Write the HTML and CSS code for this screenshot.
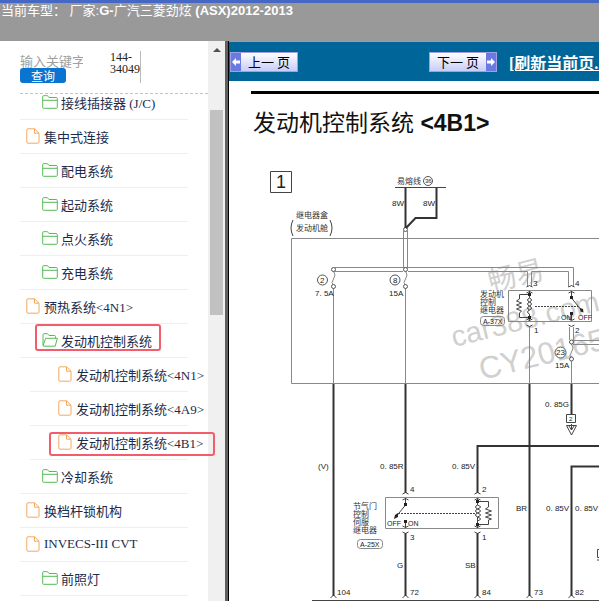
FILE: index.html
```html
<!DOCTYPE html>
<html lang="zh-CN">
<head>
    <meta charset="UTF-8">
    <meta name="viewport" content="width=device-width, initial-scale=1.0">
    <title>发动机控制系统 &lt;4B1&gt;</title>
    <link rel="stylesheet" href="styles.css">
</head>
<body>
    <svg class="defs" aria-hidden="true">
        <symbol id="folder" viewBox="0 0 16 14">
            <path d="M.7 12.500V1.500q0-.8.8-.8H5.500l1.500 1.800H14.300q1 0 1 1v9q0 .8-.8.8H1.500q-.8 0-.8-.8zM.7 5.300H15.300"/>
        </symbol>
        <symbol id="folder-open" viewBox="0 0 16 14">
            <path d="M1 12.500V1.500q0-.8.8-.8H5.500l1.500 1.800H12.500q1 0 1 1V5M1 12.800L3.600 5.300H15.400L13.200 13.200H1.500z"/>
        </symbol>
        <symbol id="file" viewBox="0 0 14 16">
            <path d="M2 .8H8.500L13 5.200V14q0 1.200-1.200 1.200H2Q.8 15.200.8 14V2Q.8.8 2 .8zM8.500.8V5.200H13"/>
        </symbol>
    </svg>

    <header class="header">当前车型： 厂家:<b>G-</b>广汽三菱劲炫 <b>(ASX)2012-2013</b></header>

    <div class="frames">
        <aside class="sidebar">
            <div class="pane">
                <form class="search">
                    <div class="search-box">
                        <input class="keyword" type="text" placeholder="输入关键字" aria-label="输入关键字">
                        <button class="query" type="button">查询</button>
                    </div>
                    <div class="code">144-<br>34049</div>
                </form>
                <ul class="tree">
                    <li class="level2"><a href="#"><svg class="icon folder"><use href="#folder"/></svg>接线插接器 (J/C)</a></li>
                    <li class="level1"><a href="#"><svg class="icon file"><use href="#file"/></svg>集中式连接</a></li>
                    <li class="level2"><a href="#"><svg class="icon folder"><use href="#folder"/></svg>配电系统</a></li>
                    <li class="level2"><a href="#"><svg class="icon folder"><use href="#folder"/></svg>起动系统</a></li>
                    <li class="level2"><a href="#"><svg class="icon folder"><use href="#folder"/></svg>点火系统</a></li>
                    <li class="level2"><a href="#"><svg class="icon folder"><use href="#folder"/></svg>充电系统</a></li>
                    <li class="level1"><a href="#"><svg class="icon file"><use href="#file"/></svg>预热系统&lt;4N1&gt;</a></li>
                    <li class="level2 marked-group"><a href="#"><svg class="icon folder"><use href="#folder-open"/></svg>发动机控制系统</a></li>
                    <li class="level3"><a href="#"><svg class="icon file"><use href="#file"/></svg>发动机控制系统&lt;4N1&gt;</a></li>
                    <li class="level3"><a href="#"><svg class="icon file"><use href="#file"/></svg>发动机控制系统&lt;4A9&gt;</a></li>
                    <li class="level3 marked-item"><a href="#"><svg class="icon file"><use href="#file"/></svg>发动机控制系统&lt;4B1&gt;</a></li>
                    <li class="level2"><a href="#"><svg class="icon folder"><use href="#folder"/></svg>冷却系统</a></li>
                    <li class="level1"><a href="#"><svg class="icon file"><use href="#file"/></svg>换档杆锁机构</a></li>
                    <li class="level1"><a href="#"><svg class="icon file"><use href="#file"/></svg>INVECS-III CVT</a></li>
                    <li class="level2"><a href="#"><svg class="icon folder"><use href="#folder"/></svg>前照灯</a></li>
                </ul>
            </div>
            <div class="scrollbar">
                <span class="arrow-up"></span>
                <span class="thumb"></span>
            </div>
        </aside>

        <main class="content">
            <nav class="toolbar">
                <button class="pager prev" type="button">
                    <svg class="pager-arrow" viewBox="0 0 10 17"><path d="M1 8.500L5 4.500V7H9V10H5V12.500z"/></svg>
                    <span>上一 页</span>
                </button>
                <button class="pager next" type="button">
                    <span>下一 页</span>
                    <svg class="pager-arrow" viewBox="0 0 10 17"><path d="M9 8.500L5 4.500V7H1V10H5V12.500z"/></svg>
                </button>
                <a class="refresh" href="#">[刷新当前页...]</a>
            </nav>

            <h1 class="title">发动机控制系统 <b>&lt;4B1&gt;</b></h1>

            <svg class="diagram" viewBox="229 150 370 451" role="img" aria-label="发动机控制系统 电路图">
                <!-- 水印 -->
                <g class="watermark">
                    <text x="491" y="292" font-size="28" transform="rotate(-14 491 292)">畅易</text>
                    <text x="454" y="347" font-size="29" transform="rotate(-14 454 347)">car388.com</text>
                    <text x="482" y="380" font-size="31" transform="rotate(-14 482 380)">CY20165</text>
                </g>

                <!-- 细线 -->
                <g class="thin">
                    <path d="M270.500 171.500h21v21h-21z" class="dark"/>
                    <path d="M395 187.500H446" class="dark"/>
                    <path d="M599 238.500H291.500V383.500H599"/>
                    <path d="M403.500 231V268M407.500 231V268M335 267.500H573.500V287M335 271.500H403M408 271.500H527.500V287M531.500 287V271.500H568.500V287"/>
                    <path d="M333.500 288V384M405.500 288V384M529.500 326V384M571.500 361V384"/>
                    <path d="M333.500 271q3 4 0 8t0 6M405.500 271q3 4 0 8t0 6M571.500 344q3 4 0 8t0 6"/>
                    <path d="M569.500 327V340M573.500 327V340.500H599M573 344.500H599"/>
                    <path d="M508.500 290.500H591.500V321.500H508.500z"/>
                    <path d="M385.500 497.500H498.500V528.500H385.500z"/>
                    <path d="M312 600.500H599" class="dark"/>
                    <path d="M293 220q-4 8 0 16M330 220q4 8 0 16" class="dark"/>
                </g>
                <g class="node">
                    <circle cx="405.500" cy="229.500" r="2"/>
                    <circle cx="333.500" cy="269.500" r="2"/>
                    <circle cx="405.500" cy="269.500" r="2"/>
                    <circle cx="333.500" cy="286.500" r="2"/>
                    <circle cx="405.500" cy="286.500" r="2"/>
                    <circle cx="571.500" cy="342" r="2"/>
                    <circle cx="571.500" cy="359" r="2"/>
                    <circle cx="428" cy="181" r="4.500"/>
                    <circle cx="322.500" cy="280" r="5"/>
                    <circle cx="395" cy="280" r="5"/>
                    <circle cx="560.500" cy="352.500" r="5.500"/>
                </g>

                <!-- 粗线 -->
                <path class="wire" d="M405.500 188V228M436.500 188V218H415.500L406 228"/>
                <path class="wire" d="M333.500 384V596M405.500 384V493M405.500 533V596M477.500 493V446H599M477.500 533V596M529.500 384V596M571.500 384V414M571.500 596V466.500H599"/>

                <!-- 接插件 -->
                <g class="thin dark">
                    <path d="M526.500 287q3-3 6 0M526.500 293q3-3 6 0M568.500 287q3-3 6 0M568.500 293q3-3 6 0"/>
                    <path d="M526.500 319q3 3 6 0M526.500 325q3 3 6 0M568.500 319q3 3 6 0M568.500 325q3 3 6 0"/>
                    <path d="M402.500 494q3-3 6 0M402.500 500q3-3 6 0M474.500 494q3-3 6 0M474.500 500q3-3 6 0"/>
                    <path d="M402.500 526q3 3 6 0M402.500 532q3 3 6 0M474.500 526q3 3 6 0M474.500 532q3 3 6 0"/>
                    <path d="M330.500 598l3-3 3 3M402.500 598l3-3 3 3M474.500 598l3-3 3 3M526.500 598l3-3 3 3M568.500 598l3-3 3 3"/>
                </g>

                <!-- 发动机控制继电器 -->
                <g class="thin dark">
                    <path d="M529.500 291V298q-4 2 0 4-4 2 0 4-4 2 0 4-4 2 0 4V321M529.500 298q4 2 0 4 4 2 0 4 4 2 0 4"/>
                    <path d="M529.500 294.500H519.500V299l-3 2 5 2-5 2 5 2-5 2 5 2-2 2V317.500H529.500"/>
                    <path d="M535 306.500H578" stroke-dasharray="2 1"/>
                    <path d="M571.500 291V298L582 311M571.500 314V320"/>
                </g>
                <path class="fill" d="M580 308l3 1 .5 3.500-3-1zM528 293h3v3h-3zM528 316h3v3h-3zM570 296h3v3h-3zM570 312h3v3h-3z"/>

                <!-- 节气门控制伺服继电器 -->
                <g class="thin dark">
                    <path d="M477.500 498V505q-4 2 0 4-4 2 0 4-4 2 0 4V528M477.500 505q6 2 0 4 6 2 0 4 6 2 0 4 6 2 0 4"/>
                    <path d="M477.500 501.500H488.500V507l-3 2 6 2-6 2 6 2-6 2 6 2-3 1V524.500H477.500"/>
                    <path d="M398 513.500H475" stroke-dasharray="2 1"/>
                    <path d="M405.500 498V505L395 518M405.500 521V528"/>
                </g>
                <path class="fill" d="M394 519l1-4 3-2 0 4zM404 503h3v3h-3zM404 520h3v3h-3zM476 500h3v3h-3zM476 523h3v3h-3z"/>

                <!-- 连接标记 -->
                <path class="thin dark" d="M566.500 414.500h9v8h-9zM566.500 425.500h10L571.500 435zM571.500 424V430M569 426l2.500 4 2.500-4M599 549.500H597.500V557.500H599M597 560H599"/>
                <rect class="thin" x="480.500" y="316.500" width="24" height="9" rx="3"/>
                <rect class="thin" x="357.500" y="539.500" width="25" height="9" rx="3"/>

                <g class="cn">
                    <text x="397" y="184">易熔线</text>
                    <text x="296" y="218">继电器盒</text>
                    <text x="296" y="231">发动机舱</text>
                    <text x="480" y="297">发动机</text>
                    <text x="480" y="305">控制</text>
                    <text x="480" y="313">继电器</text>
                    <text x="353" y="509">节气门</text>
                    <text x="353" y="517">控制</text>
                    <text x="353" y="525">伺服</text>
                    <text x="353" y="533">继电器</text>
                </g>
                <g class="label">
                    <text class="page-no" x="276" y="188">1</text>
                    <text class="tiny" x="425" y="183">36</text>
                    <text x="392" y="206">8W</text>
                    <text x="423" y="206">8W</text>
                    <text x="320" y="283">2</text>
                    <text x="393" y="283">8</text>
                    <text x="315" y="296">7. 5A</text>
                    <text x="389" y="296">15A</text>
                    <text x="533" y="286">3</text>
                    <text x="575" y="286">4</text>
                    <text x="534" y="333">1</text>
                    <text x="575" y="333">2</text>
                    <text class="small" x="561" y="320">ON</text>
                    <text class="small" x="578" y="320">OFF</text>
                    <text class="small" x="483" y="324">A-37X</text>
                    <text x="556" y="355">23</text>
                    <text x="555" y="368">15A</text>
                    <text x="545" y="407">0. 85G</text>
                    <text class="tiny" x="569" y="421">2</text>
                    <text x="318" y="469">(V)</text>
                    <text x="380" y="469">0. 85R</text>
                    <text x="452" y="469">0. 85V</text>
                    <text x="410" y="492">4</text>
                    <text x="482" y="492">2</text>
                    <text class="small" x="387" y="526">OFF</text>
                    <text class="small" x="408" y="526">ON</text>
                    <text x="410" y="540">3</text>
                    <text x="482" y="540">1</text>
                    <text class="small" x="360" y="547">A-25X</text>
                    <text x="516" y="511">BR</text>
                    <text x="546" y="511">0. 85V</text>
                    <text x="575" y="511">0. 85V</text>
                    <text x="397" y="568">G</text>
                    <text x="465" y="568">SB</text>
                    <text x="337" y="595">104</text>
                    <text x="410" y="595">72</text>
                    <text x="482" y="595">84</text>
                    <text x="534" y="595">73</text>
                    <text x="575" y="595">82</text>
                </g>
            </svg>
        </main>
    </div>
</body>
</html>
```
FILE: styles.css
```css
*,
*::after {
    box-sizing: border-box;
}
body {
    display: flex;
    flex-direction: column;
    height: 100vh;
    margin: 0;
    overflow: hidden;
    font-family: "Liberation Serif", "Noto Sans CJK SC", serif;
    font-size: 13px;
    color: #1c2b4a;
    background: #fff;
}
.defs {
    position: absolute;
    width: 0;
    height: 0;
}
.header {
    flex: none;
    height: 41px;
    padding-left: 1px;
    border-top: 3px solid #4468c4;
    background: #999;
    color: #fff;
    font-family: "Liberation Sans", "Noto Sans CJK SC", sans-serif;
    line-height: 15px;
    white-space: pre;
}
.frames {
    display: flex;
    flex: 1;
    min-height: 0;
}

/* 左侧目录 */
.sidebar {
    display: flex;
    flex: none;
    width: 229px;
    border-right: 1px solid #000;
    box-shadow: inset -3px 0 #606060;
}
.pane {
    width: 208px;
    padding-left: 20px;
}
.search {
    display: flex;
    height: 53px;
    padding-top: 10px;
    border-bottom: 1px dashed #c4c4c4;
}
.search-box {
    display: flex;
    flex-direction: column;
    width: 63px;
    margin-right: 27px;
    padding-top: 2px;
}
.keyword {
    width: 100%;
    height: 15px;
    padding: 0;
    border: 0;
    outline: 0;
    font: 13px "Noto Sans CJK SC", sans-serif;
}
.keyword::placeholder {
    color: #a0a0a0;
}
.query {
    width: 46px;
    height: 15px;
    padding: 0;
    border: 0;
    border-radius: 3px;
    background: #0a75d0;
    color: #fff;
    font: 12px/15px "Noto Sans CJK SC", sans-serif;
}
.code {
    height: 32px;
    border-right: 1px solid #bbb;
    color: #222;
    font-size: 12px;
    line-height: 12px;
}
.tree {
    margin: -8px 20px 0 0;
    padding: 0;
    list-style: none;
}
.tree li {
    position: relative;
    height: 34px;
    border-bottom: 1px solid #eee;
}
.tree a {
    display: flex;
    align-items: center;
    height: 32px;
    color: #1c2b4a;
    text-decoration: none;
    white-space: nowrap;
}
.level1 a {
    padding-left: 6px;
}
.level2 a {
    padding-left: 22px;
}
.tree .level3 {
    margin-left: 10px;
}
.level3 a {
    padding-left: 28px;
}
.icon {
    flex: none;
    fill: none;
}
.folder {
    width: 16px;
    height: 14px;
    margin-right: 3px;
    stroke: #55bb55;
}
.file {
    width: 14px;
    height: 16px;
    margin-right: 4px;
    stroke: #f2a860;
}
.marked-group::after,
.marked-item::after {
    content: "";
    position: absolute;
    border: 2px solid #f25c6b;
    border-radius: 3px;
    z-index: 1;
}
.marked-group::after {
    top: 0;
    left: 15px;
    width: 126px;
    height: 27px;
}
.marked-item::after {
    top: 6px;
    left: 19px;
    width: 166px;
    height: 24px;
}
.scrollbar {
    display: flex;
    flex-direction: column;
    align-items: center;
    width: 17px;
    padding-top: 7px;
    background: #f0f0f0;
}
.arrow-up {
    border: 4px solid transparent;
    border-top: 0;
    border-bottom: 4px solid #505050;
}
.thumb {
    width: 13px;
    height: 205px;
    margin-top: 58px;
    background: #c1c1c1;
}

/* 右侧内容 */
.content {
    flex: 1;
    min-width: 0;
    overflow: hidden;
}
.toolbar {
    display: flex;
    align-items: center;
    height: 40px;
    padding-left: 1px;
    border-top: 1px solid #7fa6bb;
    background: #069;
    white-space: nowrap;
}
.pager {
    display: flex;
    flex: none;
    justify-content: space-between;
    width: 68px;
    height: 20px;
    padding: 0;
    border: 1px solid #a0a0e4;
    background: linear-gradient(#fff, #c8ccf8);
    color: #000;
    font: 13px/17px "Noto Sans CJK SC", sans-serif;
}
.pager span {
    flex: 1;
    text-align: center;
}
.pager-arrow {
    width: 10px;
    height: 18px;
    background: #6a7ae0;
    fill: #fff;
}
.next {
    margin-left: 131px;
}
.refresh {
    margin-left: 12px;
    color: #fff;
    font-size: 16px;
    font-weight: bold;
}
.title {
    margin: 10px 0 0 22px;
    padding: 13px 0 10px 2px;
    border-top: 3px solid #000;
    color: #111;
    font: 23px/33px "Liberation Sans", "Noto Sans CJK SC", sans-serif;
    white-space: nowrap;
}
.diagram {
    display: block;
    width: 370px;
    height: 451px;
}
.thin {
    fill: none;
    stroke: #888;
}
.dark {
    stroke: #444;
}
.node {
    fill: #fff;
    stroke: #555;
}
.wire {
    fill: none;
    stroke: #333;
    stroke-width: 2;
}
.fill {
    fill: #222;
}
.watermark {
    fill: #d0d0d0;
    font-family: "Liberation Sans", "Noto Sans CJK SC", sans-serif;
}
.cn {
    fill: #333;
    font: 8px "Noto Sans CJK SC", sans-serif;
}
.label {
    fill: #222;
    font: 8px "Liberation Sans", sans-serif;
}
.small {
    font-size: 7px;
}
.tiny {
    font-size: 6px;
}
.page-no {
    font-size: 18px;
}
```
